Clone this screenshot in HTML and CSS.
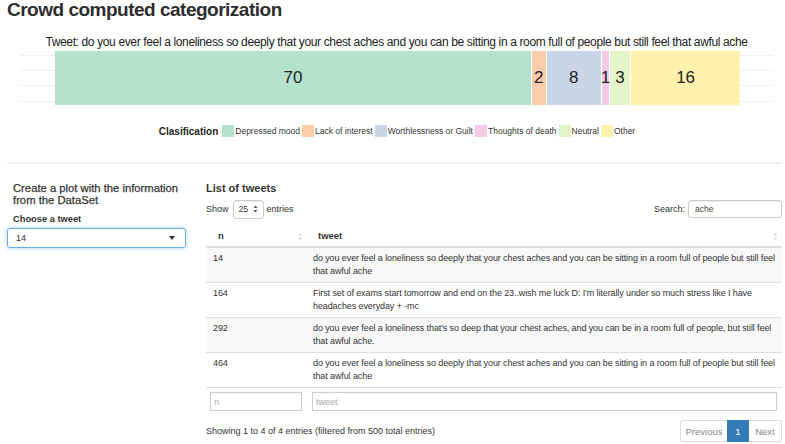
FILE: index.html
```html
<!DOCTYPE html>
<html>
<head>
<meta charset="utf-8">
<link rel="stylesheet" href="styles.css">
</head>
<body>
<div class="page">
  <h1 class="title">Crowd computed categorization</h1>
  <p class="tweet">Tweet: do you ever feel a loneliness so deeply that your chest aches and you can be sitting in a room full of people but still feel that awful ache</p>
  <div class="chart">
    <div class="bar">
      <div class="seg c1" style="flex-grow:70">70</div>
      <div class="seg c2" style="flex-grow:2">2</div>
      <div class="seg c3" style="flex-grow:8">8</div>
      <div class="seg c4" style="flex-grow:1">1</div>
      <div class="seg c5" style="flex-grow:3">3</div>
      <div class="seg c6" style="flex-grow:16">16</div>
    </div>
  </div>
  <div class="legend">
    <strong class="legend-title">Clasification</strong>
    <span class="sw c1"></span><span class="lab">Depressed mood</span>
    <span class="sw c2"></span><span class="lab">Lack of interest</span>
    <span class="sw c3"></span><span class="lab">Worthlessness or Guilt</span>
    <span class="sw c4"></span><span class="lab">Thoughts of death</span>
    <span class="sw c5"></span><span class="lab">Neutral</span>
    <span class="sw c6"></span><span class="lab">Other</span>
  </div>
  <hr class="rule">
  <div class="cols">
    <div class="side">
      <h4 class="side-title">Create a plot with the information from the DataSet</h4>
      <div class="side-label">Choose a tweet</div>
      <div class="select"><span>14</span><span class="caret"></span></div>
    </div>
    <div class="main">
      <h4 class="list-title">List of tweets</h4>
      <div class="controls">
        <div class="length">Show <span class="len-select"><span>25</span><svg width="5" height="8" viewBox="0 0 5 8"><path d="M2.5 0.5 L4.5 3 L0.5 3 Z M2.5 7.5 L4.5 5 L0.5 5 Z" fill="#555"/></svg></span> entries</div>
        <div class="search">Search: <span class="search-input">ache</span></div>
      </div>
      <table class="tbl">
        <colgroup><col class="col-n"><col class="col-t"></colgroup>
        <thead>
          <tr>
            <th><div class="th-in"><span>n</span><svg class="sort" width="5" height="9" viewBox="0 0 5 9"><path d="M2.5 0.5 L4.5 3.5 L0.5 3.5 Z M2.5 8.5 L4.5 5.5 L0.5 5.5 Z" fill="#ddd"/></svg></div></th>
            <th><div class="th-in"><span>tweet</span><svg class="sort" width="5" height="9" viewBox="0 0 5 9"><path d="M2.5 0.5 L4.5 3.5 L0.5 3.5 Z M2.5 8.5 L4.5 5.5 L0.5 5.5 Z" fill="#ddd"/></svg></div></th>
          </tr>
        </thead>
        <tbody>
          <tr class="odd"><td>14</td><td>do you ever feel a loneliness so deeply that your chest aches and you can be sitting in a room full of people but still feel that awful ache</td></tr>
          <tr><td>164</td><td>First set of exams start tomorrow and end on the 23..wish me luck D: I'm literally under so much stress like I have headaches everyday + -mc</td></tr>
          <tr class="odd"><td>292</td><td>do you ever feel a loneliness that's so deep that your chest aches, and you can be in a room full of people, but still feel that awful ache.</td></tr>
          <tr><td>464</td><td>do you ever feel a loneliness so deeply that your chest aches and you can be sitting in a room full of people but still feel that awful ache</td></tr>
        </tbody>
        <tfoot>
          <tr>
            <td class="f-n"><div class="filter">n</div></td>
            <td class="f-t"><div class="filter">tweet</div></td>
          </tr>
        </tfoot>
      </table>
      <div class="bottom">
        <div class="info">Showing 1 to 4 of 4 entries (filtered from 500 total entries)</div>
        <div class="pager">
          <span class="pg pg-prev">Previous</span><span class="pg pg-active">1</span><span class="pg pg-next">Next</span>
        </div>
      </div>
    </div>
  </div>
</div>
</body>
</html>
```

FILE: styles.css
```css
* { box-sizing: border-box; }
html, body { margin: 0; padding: 0; background: #fff; }
body {
  font-family: "Liberation Sans", Arial, Helvetica, sans-serif;
  color: #333;
  width: 785px;
  height: 444px;
  overflow: hidden;
}
.page { padding: 0 3px 0 7px; }

.title {
  margin: 0;
  font-size: 19px;
  line-height: 20px;
  font-weight: bold;
  letter-spacing: -0.5px;
  color: #2d2d2d;
}

.tweet {
  margin: 15px 0 0 0;
  padding-left: 4px;
  font-size: 12px;
  line-height: 14px;
  letter-spacing: -0.36px;
  text-align: center;
  white-space: nowrap;
  color: #222;
}

.chart {
  margin: 2px 0 0 13px;
  width: 753px;
  height: 54px;
  background:
    linear-gradient(#f1f1f1, #f1f1f1) 0 4px / 100% 1px no-repeat,
    linear-gradient(#f1f1f1, #f1f1f1) 0 19px / 100% 1px no-repeat,
    linear-gradient(#f1f1f1, #f1f1f1) 0 34px / 100% 1px no-repeat,
    linear-gradient(#f1f1f1, #f1f1f1) 0 50px / 100% 1px no-repeat;
}
.bar {
  margin-left: 35px;
  width: 685px;
  height: 54px;
  display: flex;
  gap: 1px;
  background: #fff;
}
.seg {
  flex-basis: 0;
  min-width: 0;
  display: flex;
  align-items: center;
  justify-content: center;
  font-size: 17px;
  color: #222;
  white-space: nowrap;
  overflow: visible;
}
.c1 { background: #b3e2cd; }
.c2 { background: #fdcdac; }
.c3 { background: #cbd5e8; }
.c4 { background: #f4cae4; }
.c5 { background: #e6f5c9; }
.c6 { background: #fff2ae; }

.legend {
  margin-top: 19px;
  padding-left: 5px;
  height: 14px;
  display: flex;
  align-items: center;
  justify-content: center;
  font-size: 8.5px;
  color: #333;
}
.legend-title {
  font-size: 10px;
  font-weight: bold;
  color: #222;
  margin-right: 2px;
}
.sw {
  width: 12px;
  height: 12px;
  margin-left: 2px;
  margin-right: 1px;
}

.rule {
  margin: 24px 0 0 0;
  border: 0;
  height: 2px;
  background: #eeeeee;
}

.cols {
  display: flex;
  gap: 20px;
  padding-top: 18px;
}
.side { width: 179px; flex: none; }
.side-title {
  margin: 1px 0 0 6px;
  font-size: 11.25px;
  line-height: 11.5px;
  font-weight: normal;
  color: #333;
  -webkit-text-stroke: 0.25px #333;
}
.side-label {
  margin: 8px 0 0 6px;
  font-size: 9.3px;
  line-height: 11px;
  font-weight: bold;
  color: #333;
}
.select {
  margin-top: 3px;
  height: 20px;
  border: 1px solid #66afe9;
  border-radius: 3px;
  box-shadow: 0 0 4px rgba(102, 175, 233, 0.6);
  display: flex;
  align-items: center;
  justify-content: space-between;
  padding: 0 10px 0 8px;
  font-size: 9px;
  color: #333;
}
.caret {
  width: 0;
  height: 0;
  border-left: 3.5px solid transparent;
  border-right: 3.5px solid transparent;
  border-top: 4px solid #333;
}

.main { width: 576px; flex: none; }
.list-title {
  margin: 0;
  font-size: 11px;
  line-height: 12px;
  font-weight: bold;
  color: #333;
}
.controls {
  margin-top: 6px;
  height: 18px;
  display: flex;
  align-items: center;
  justify-content: space-between;
  font-size: 9px;
  color: #333;
}
.length { display: flex; align-items: center; }
.len-select {
  display: inline-flex;
  align-items: center;
  justify-content: space-between;
  width: 31px;
  height: 19px;
  margin: 0 3px 0 4px;
  padding: 0 5px 0 5px;
  border: 1px solid #ccc;
  border-radius: 3px;
  box-shadow: inset 0 1px 1px rgba(0,0,0,0.07);
  font-size: 8.5px;
  background: #fff;
}
.search { display: flex; align-items: center; }
.search-input {
  display: inline-flex;
  align-items: center;
  width: 94px;
  height: 18px;
  margin-left: 3px;
  padding-left: 6px;
  border: 1px solid #ccc;
  border-radius: 3px;
  box-shadow: inset 0 1px 1px rgba(0,0,0,0.07);
  font-size: 8.5px;
  color: #444;
}

.tbl {
  margin-top: 7px;
  width: 576px;
  table-layout: fixed;
  border-collapse: separate;
  border-spacing: 0;
  font-size: 9px;
  color: #333;
}
.col-n { width: 100px; }
.col-t { width: 476px; }
.tbl th {
  padding: 1px 0 0 0;
  height: 21px;
  border-bottom: 1px solid #ddd;
  text-align: left;
  font-size: 9.5px;
  font-weight: bold;
  line-height: 20px;
}
.th-in {
  display: flex;
  align-items: center;
  justify-content: space-between;
  padding: 0 3px 0 12px;
}
.tbl th:last-child .th-in { padding-right: 4px; }
.tbl tbody td {
  border-top: 1px solid #ddd;
  padding: 4px 0 4px 7px;
  line-height: 13px;
  vertical-align: top;
  letter-spacing: -0.1px;
}
.tbl tbody tr.odd td { background: #f8f8f8; }
.tbl tfoot td {
  border-top: 1px solid #ddd;
  padding: 4px 4px 4px 4px;
}
.tbl tfoot td.f-t { padding: 4px 5px 4px 6px; }
.filter {
  height: 19px;
  border: 1px solid #ccc;
  padding-left: 3px;
  display: flex;
  align-items: center;
  color: #aaa;
  font-size: 9px;
}

.bottom {
  margin-top: 5px;
  display: flex;
  align-items: center;
  justify-content: space-between;
}
.info { font-size: 9px; color: #333; }
.pager { display: flex; height: 22px; font-size: 9.5px; }
.pg {
  display: flex;
  align-items: center;
  justify-content: center;
  height: 22px;
  border: 1px solid #ddd;
  color: #888;
  background: #fff;
}
.pg-prev { width: 47px; border-radius: 3px 0 0 3px; border-right: 0; }
.pg-active { width: 22px; background: #337ab7; border-color: #337ab7; color: #fff; }
.pg-next { width: 33px; border-radius: 0 3px 3px 0; border-left: 0; }
```
